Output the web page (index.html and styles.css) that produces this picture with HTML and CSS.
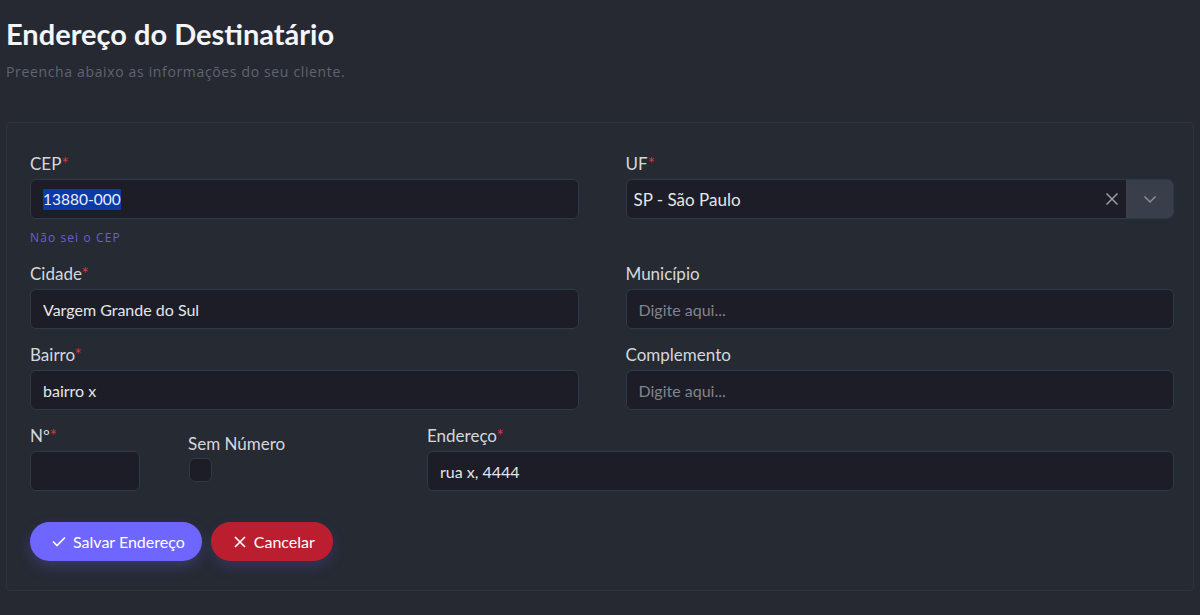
FILE: index.html
```html
<!DOCTYPE html>
<html lang="pt-BR">
<head>
<meta charset="utf-8">
<title>Endereço do Destinatário</title>
<link rel="stylesheet" href="styles.css">
</head>
<body>
<header class="page-head">
  <h1 class="title">Endereço do Destinatário</h1>
  <p class="subtitle">Preencha abaixo as informações do seu cliente.</p>
</header>
<section class="card">
  <div class="grid">
    <div class="group">
      <label class="label">CEP<span class="req">*</span></label>
      <div class="field"><span class="sel">13880-000</span></div>
      <a class="hint">Não sei o CEP</a>
    </div>
    <div class="group">
      <label class="label">UF<span class="req">*</span></label>
      <div class="select">
        <span class="select-value">SP - São Paulo</span>
        <span class="clear">
          <svg width="14" height="14" viewBox="0 0 14 14"><path d="M1.5 1.5 L12.5 12.5 M12.5 1.5 L1.5 12.5" stroke="#9a9ca6" stroke-width="1.5" fill="none"/></svg>
        </span>
        <span class="caret">
          <svg width="14" height="9" viewBox="0 0 14 9"><path d="M1.5 1.5 L7 7 L12.5 1.5" stroke="#8a8d98" stroke-width="1.5" fill="none"/></svg>
        </span>
      </div>
    </div>
    <div class="group">
      <label class="label">Cidade<span class="req">*</span></label>
      <input class="input" type="text" value="Vargem Grande do Sul">
    </div>
    <div class="group">
      <label class="label">Município</label>
      <input class="input" type="text" placeholder="Digite aqui...">
    </div>
    <div class="group">
      <label class="label">Bairro<span class="req">*</span></label>
      <input class="input" type="text" value="bairro x">
    </div>
    <div class="group">
      <label class="label">Complemento</label>
      <input class="input" type="text" placeholder="Digite aqui...">
    </div>
  </div>
  <div class="row-last">
    <div class="group num">
      <label class="label">Nº<span class="req">*</span></label>
      <input class="input" type="text">
    </div>
    <div class="group semnum">
      <label class="label">Sem Número</label>
      <span class="checkbox"></span>
    </div>
    <div class="group endereco">
      <label class="label">Endereço<span class="req">*</span></label>
      <input class="input" type="text" value="rua x, 4444">
    </div>
  </div>
  <div class="actions">
    <button class="btn btn-primary">
      <svg width="14" height="11" viewBox="0 0 14 11"><path d="M1 5.5 L5 9.5 L13 1.5" stroke="#fff" stroke-width="1.7" fill="none"/></svg>
      Salvar Endereço
    </button>
    <button class="btn btn-danger">
      <svg width="12" height="12" viewBox="0 0 12 12"><path d="M1 1 L11 11 M11 1 L1 11" stroke="#fff" stroke-width="1.7" fill="none"/></svg>
      Cancelar
    </button>
  </div>
</section>
</body>
</html>
```

FILE: styles.css
```css
* { box-sizing: border-box; }
html, body { height: 100%; }
body {
  margin: 0;
  padding: 17px 6px 0 6px;
  background: #262932;
  font-family: Lato, "Noto Sans", sans-serif;
  color: #d4d6dc;
}
.page-head { margin: 0; }
.title {
  margin: 0;
  font-size: 29px;
  line-height: 34px;
  font-weight: 700;
  color: #f4f5f8;
}
.subtitle {
  margin: 12px 0 0 0;
  font-family: "Open Sans", sans-serif;
  font-size: 14px;
  line-height: 18px;
  letter-spacing: 0.65px;
  color: #5f6470;
}
.card {
  margin-top: 41px;
  border: 1px solid #2f333d;
  border-radius: 4px;
  background: #262a33;
  padding: 31px 19px 29px 23px;
}
.grid {
  display: grid;
  grid-template-columns: 1fr 1fr;
  column-gap: 47px;
  row-gap: 16px;
}
.group { display: flex; flex-direction: column; }
.label {
  font-size: 17px;
  line-height: 20px;
  color: #d5d7dd;
  margin-bottom: 5px;
}
.req { color: #d63b3b; }
.input, .field, .select {
  height: 40px;
  width: 100%;
  background: #1c1d26;
  border: 1px solid #2f3949;
  border-radius: 6px;
  color: #e4e6eb;
  font-family: Lato, "Noto Sans", sans-serif;
  font-size: 16px;
  padding: 0 12px;
  outline: none;
}
.input::placeholder { color: #80848e; }
.field { display: flex; align-items: center; }
.sel { background: #0b3aa6; color: #e9eefc; line-height: 21px; font-size: 15.5px; }
.hint {
  margin-top: 11px;
  margin-bottom: 2px;
  font-family: "Open Sans", sans-serif;
  font-size: 12px;
  line-height: 16px;
  letter-spacing: 1.1px;
  color: #6a5fd6;
}
.select {
  display: flex;
  align-items: stretch;
  padding: 0;
  overflow: hidden;
}
.select-value {
  flex: 1;
  display: flex;
  align-items: center;
  padding-left: 7px;
  font-size: 17px;
}
.clear {
  display: flex;
  align-items: center;
  padding: 0 7px 0 8px;
}
.caret {
  width: 47px;
  background: #3a3d4a;
  display: flex;
  align-items: center;
  justify-content: center;
}
.row-last {
  display: flex;
  margin-top: 16px;
}
.num { width: 110px; }
.semnum { margin-left: 48px; width: 190px; padding-top: 8px; }
.semnum .label { margin-bottom: 4px; }
.checkbox {
  width: 23px;
  height: 24px;
  margin-left: 1px;
  border: 1px solid #2f3949;
  border-radius: 6px;
  background: #1c1d26;
}
.endereco { flex: 1; margin-left: 49px; }
.actions {
  display: flex;
  gap: 9px;
  margin-top: 31px;
}
.btn {
  height: 39px;
  border: none;
  border-radius: 20px;
  color: #ffffff;
  font-family: Lato, "Noto Sans", sans-serif;
  font-size: 16px;
  display: flex;
  align-items: center;
  gap: 7px;
}
.btn-primary {
  background: #6e66ff;
  box-shadow: 0 6px 14px rgba(110, 102, 255, 0.25);
  padding: 0 17px 0 22px;
}
.btn-danger {
  background: #bb1f2f;
  box-shadow: 0 6px 14px rgba(110, 102, 255, 0.18);
  padding: 0 18px 0 23px;
  gap: 8px;
}
```
